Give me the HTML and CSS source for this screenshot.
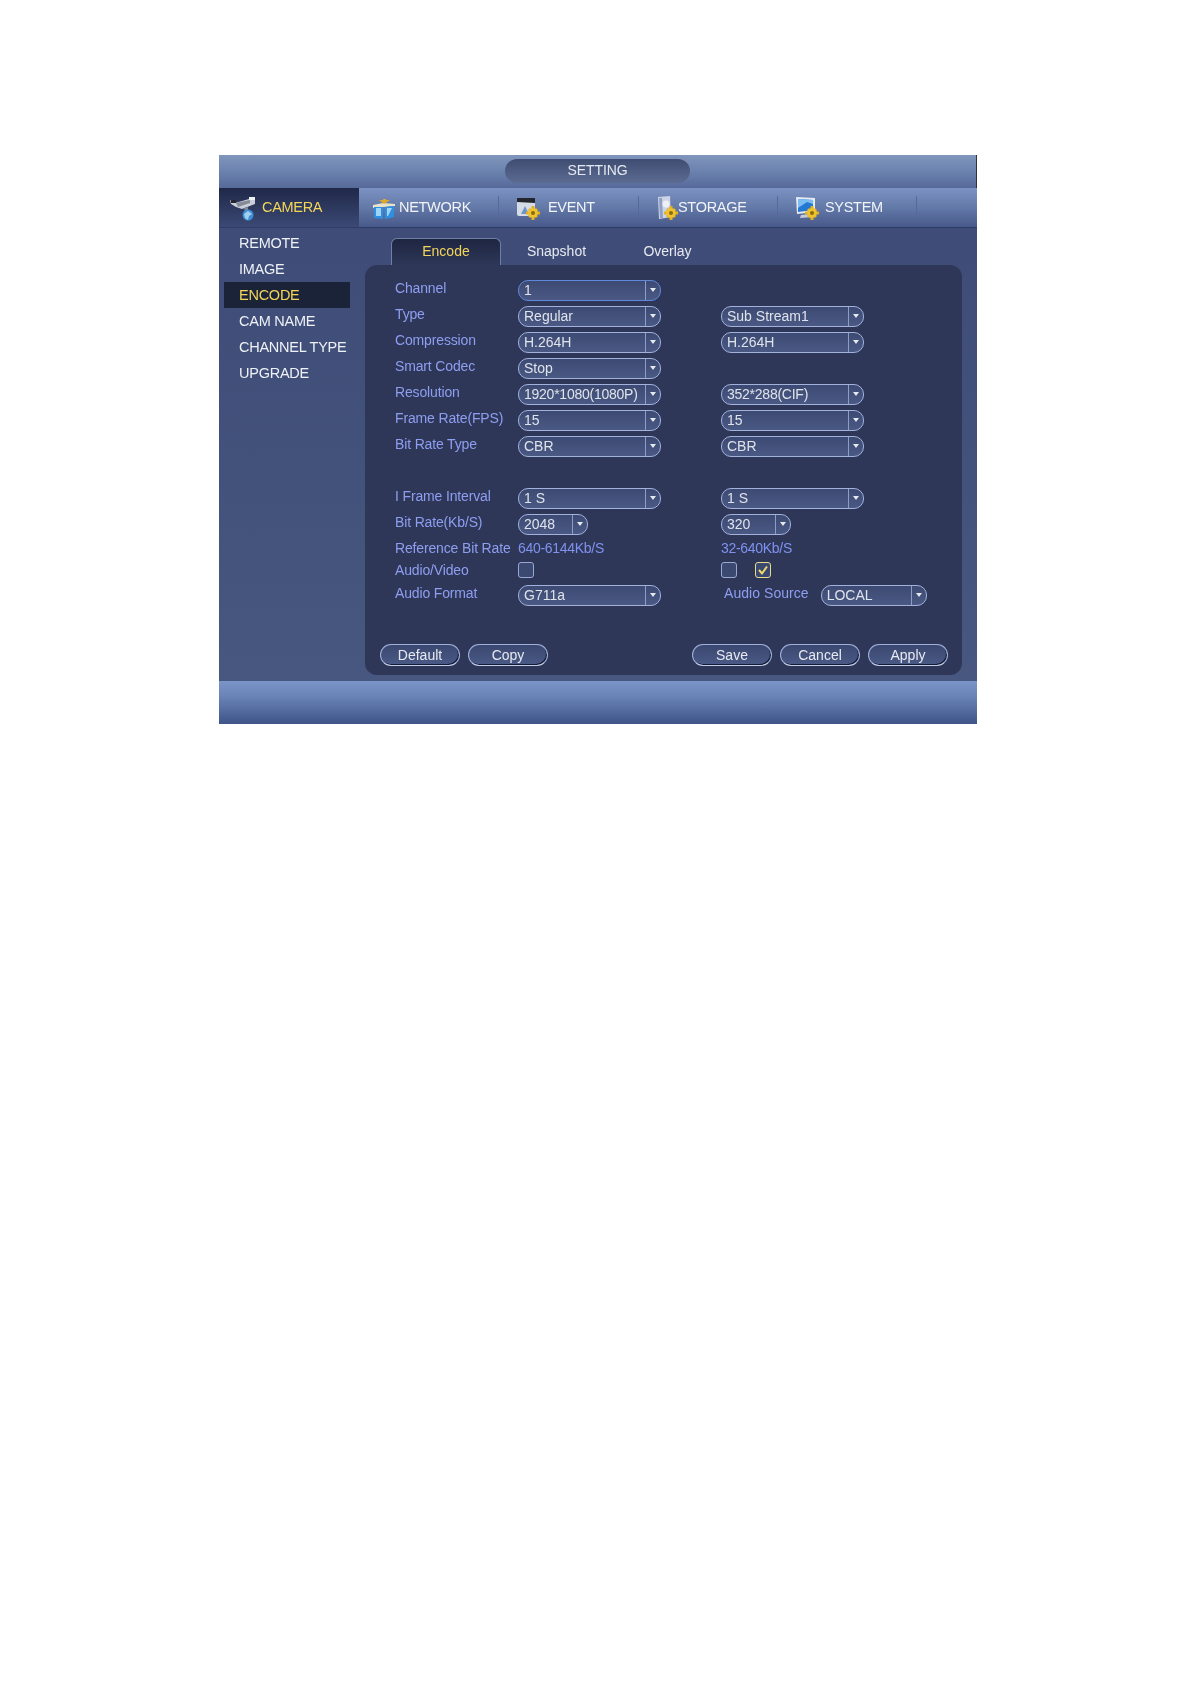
FILE: index.html
```html
<!DOCTYPE html>
<html>

<head>
    <title>SETTING</title>
    <link rel="stylesheet" href="styles.css">
</head>

<body>
    <div class="window">
        <div class="titlebar">
            <div class="title-pill">SETTING</div>
        </div>

        <div class="menubar">
            <div class="menu-item menu-camera active">
                <svg class="icon" width="26" height="24" viewBox="0 0 26 24">
                    <path d="M0 3 L5 6 L19 2 L25 1 L25 7 L12 12 L6 10 L1 7 Z" fill="#c9ced8"/>
                    <path d="M6 6 L20 3 L20 6 L8 10 Z" fill="#858b96"/>
                    <rect x="19" y="0" width="6" height="3" fill="#eef0f4"/>
                    <rect x="1" y="3" width="5" height="3" fill="#23262e"/>
                    <path d="M14 11 L18 10 L18 15 L15 15 Z" fill="#7f8796"/>
                    <circle cx="18" cy="18" r="5.5" fill="#3f8fd8"/>
                    <path d="M14 17 L18 14 L22 17 L19 19 L18 23 L15 21 Z" fill="#9fd0ef"/>
                </svg>
                <span>CAMERA</span>
            </div>
            <div class="menu-item menu-network">
                <svg class="icon" width="24" height="22" viewBox="0 0 24 22">
                    <path d="M1 7 L11 5 L23 6 L23 8 L11 9 L1 10 Z" fill="#e8e2c8"/>
                    <path d="M2 9 L11 9 L11 21 L2 20 Z" fill="#2f8fe0"/>
                    <path d="M13 9 L22 8 L22 19 L13 21 Z" fill="#2f8fe0"/>
                    <path d="M4 10 L9 10 L9 18 L4 18 Z" fill="#9fd4f6"/>
                    <path d="M15 10 L20 10 L16 18 L15 18 Z" fill="#9fd4f6"/>
                    <path d="M11 1 L14 1 L14 5 L11 5 Z M7 2 L18 2 L12 6 Z" fill="#e0a92c"/>
                </svg>
                <span>NETWORK</span>
            </div>
            <div class="menu-item menu-event">
                <svg class="icon" width="24" height="24" viewBox="0 0 24 24">
                    <rect x="1" y="2" width="18" height="18" rx="2" fill="#d5dce6"/>
                    <path d="M1 2 L19 2 L19 7 L1 6 Z" fill="#23262e"/>
                    <path d="M5 18 L9 10 L13 18 Z" fill="#6f94c8"/>
                    <use href="#gear" x="10" y="10"/>
                </svg>
                <span>EVENT</span>
            </div>
            <div class="menu-item menu-storage">
                <svg class="icon" width="21" height="24" viewBox="0 0 21 24">
                    <path d="M1 1 L13 0 L14 21 L2 23 Z" fill="#ccd4e6"/>
                    <path d="M2 2 L5 2 L6 22 L3 22 Z" fill="#8fa0c4"/>
                    <circle cx="9" cy="8" r="3.5" fill="#eef0f6"/>
                    <use href="#gear" x="7" y="10"/>
                </svg>
                <span>STORAGE</span>
            </div>
            <div class="menu-item menu-system">
                <svg class="icon" width="24" height="24" viewBox="0 0 24 24">
                    <path d="M1 1 L20 2 L20 16 L2 18 Z" fill="#e6eaf2"/>
                    <path d="M3 3 L18 4 L18 14 L3 16 Z" fill="#2478d2"/>
                    <path d="M3 12 L12 6 L18 8 L18 4 L3 3 Z" fill="#7dbcf0"/>
                    <path d="M6 19 L16 18 L18 21 L5 22 Z" fill="#c4cbda"/>
                    <use href="#gear" x="10" y="10"/>
                </svg>
                <span>SYSTEM</span>
            </div>
        </div>

        <div class="main">
            <div class="sidebar">
                <div class="side-item">REMOTE</div>
                <div class="side-item">IMAGE</div>
                <div class="side-item selected">ENCODE</div>
                <div class="side-item">CAM NAME</div>
                <div class="side-item">CHANNEL TYPE</div>
                <div class="side-item">UPGRADE</div>
            </div>

            <div class="content">
                <div class="tabs">
                    <div class="tab active">Encode</div>
                    <div class="tab">Snapshot</div>
                    <div class="tab">Overlay</div>
                </div>

                <div class="panel">
                    <div class="form">
                        <div class="row">
                            <div class="label">Channel</div>
                            <div class="select focus"><span>1</span><i></i></div>
                        </div>
                        <div class="row">
                            <div class="label">Type</div>
                            <div class="select"><span>Regular</span><i></i></div>
                            <div class="select second"><span>Sub Stream1</span><i></i></div>
                        </div>
                        <div class="row">
                            <div class="label">Compression</div>
                            <div class="select"><span>H.264H</span><i></i></div>
                            <div class="select second"><span>H.264H</span><i></i></div>
                        </div>
                        <div class="row">
                            <div class="label">Smart Codec</div>
                            <div class="select"><span>Stop</span><i></i></div>
                        </div>
                        <div class="row">
                            <div class="label">Resolution</div>
                            <div class="select tight"><span>1920*1080(1080P)</span><i></i></div>
                            <div class="select second tight"><span>352*288(CIF)</span><i></i></div>
                        </div>
                        <div class="row">
                            <div class="label">Frame Rate(FPS)</div>
                            <div class="select"><span>15</span><i></i></div>
                            <div class="select second"><span>15</span><i></i></div>
                        </div>
                        <div class="row">
                            <div class="label">Bit Rate Type</div>
                            <div class="select"><span>CBR</span><i></i></div>
                            <div class="select second"><span>CBR</span><i></i></div>
                        </div>
                        <div class="row"></div>
                        <div class="row">
                            <div class="label">I Frame Interval</div>
                            <div class="select"><span>1 S</span><i></i></div>
                            <div class="select second"><span>1 S</span><i></i></div>
                        </div>
                        <div class="row">
                            <div class="label">Bit Rate(Kb/S)</div>
                            <div class="select small"><span>2048</span><i></i></div>
                            <div class="select small second-small"><span>320</span><i></i></div>
                        </div>
                        <div class="row row-text">
                            <div class="label">Reference Bit Rate</div>
                            <div class="range">640-6144Kb/S</div>
                            <div class="range range-second">32-640Kb/S</div>
                        </div>
                        <div class="row row-check">
                            <div class="label">Audio/Video</div>
                            <div class="check"></div>
                            <div class="check check-second"></div>
                            <div class="check check-on">
                                <svg width="14" height="14" viewBox="0 0 14 14">
                                    <path d="M3 7 L6 10.5 L11 3.5" fill="none" stroke="#f2dc6a" stroke-width="2"/>
                                </svg>
                            </div>
                        </div>
                        <div class="row">
                            <div class="label">Audio Format</div>
                            <div class="select"><span>G711a</span><i></i></div>
                            <div class="label label-source">Audio Source</div>
                            <div class="select local"><span>LOCAL</span><i></i></div>
                        </div>
                    </div>

                    <div class="buttons">
                        <div class="btn-group">
                            <div class="btn">Default</div>
                            <div class="btn">Copy</div>
                        </div>
                        <div class="btn-group">
                            <div class="btn">Save</div>
                            <div class="btn">Cancel</div>
                            <div class="btn">Apply</div>
                        </div>
                    </div>
                </div>
            </div>
        </div>

        <div class="footer"></div>
    </div>

    <!-- shared gear for the menu icons -->
    <svg class="defs" width="0" height="0">
        <defs>
            <g id="gear">
                <path d="M5.5 0 H8.5 V14 H5.5 Z M0 5.5 H14 V8.5 H0 Z M2 4 L4 2 L12 10 L10 12 Z M10 2 L12 4 L4 12 L2 10 Z" fill="#e2b11c"/>
                <circle cx="7" cy="7" r="4.8" fill="#efc32e"/>
                <circle cx="7" cy="7" r="2" fill="#8a6a14"/>
            </g>
        </defs>
    </svg>
</body>

</html>
```

FILE: styles.css
```css
body {
    margin: 0;
    padding: 155px 0 0 219px;
    background-color: white;
    font-family: "Liberation Sans", Arial, sans-serif;
    font-size: 14px;
}

.defs {
    position: absolute;
}

.window {
    width: 758px;
    height: 569px;
    display: flex;
    flex-direction: column;
    filter: blur(0.4px);
}

/* top bar with the pill */
.titlebar {
    height: 33px;
    display: flex;
    justify-content: center;
    padding-top: 4px;
    box-sizing: border-box;
    background: linear-gradient(#8096bc, #6d84b0 45%, #566a9a);
    border-right: 1px solid #333;
}

.title-pill {
    width: 185px;
    height: 24px;
    border-radius: 12px;
    background: linear-gradient(#3f4d72, #5c6b92);
    color: #e4e8f0;
    line-height: 22px;
    letter-spacing: -0.1px;
    text-align: center;
}

/* menu */
.menubar {
    height: 40px;
    display: flex;
    box-sizing: border-box;
    background: linear-gradient(#7c92c2, #6379a8 50%, #47598a);
    border-bottom: 1px solid #2f3c66;
}

.menu-item {
    height: 39px;
    padding-bottom: 2px;
    box-sizing: border-box;
    display: flex;
    align-items: center;
    color: #f2f4f8;
    font-size: 14.5px;
    letter-spacing: -0.3px;
    position: relative;
}

.menu-item::after {
    content: "";
    position: absolute;
    right: 0;
    top: 8px;
    bottom: 8px;
    width: 1px;
    background: #566a99;
}

.menu-camera {
    width: 140px;
    padding-left: 11px;
    background: linear-gradient(#1f2848, #3b4975);
    color: #f3d55a;
}

.menu-camera::after {
    display: none;
}

.menu-camera .icon {
    margin-right: 6px;
    margin-top: 4px;
}

.menu-network {
    width: 140px;
    padding-left: 13px;
}

.menu-network .icon {
    margin-right: 3px;
    margin-top: 4px;
}

.menu-event {
    width: 140px;
    padding-left: 17px;
}

.menu-event .icon {
    margin-right: 8px;
    margin-top: 2px;
}

.menu-storage {
    width: 139px;
    padding-left: 18px;
}

.menu-storage .icon {
    margin-top: 2px;
}

.menu-system {
    width: 139px;
    padding-left: 17px;
}

.menu-system .icon {
    margin-right: 6px;
    margin-top: 2px;
}

/* middle part */
.main {
    flex: 1;
    display: flex;
    background: linear-gradient(#3e4c77, #47577f);
}

.sidebar {
    width: 146px;
    padding: 2px 0 0 5px;
    box-sizing: border-box;
}

.side-item {
    width: 126px;
    height: 26px;
    line-height: 26px;
    padding-left: 15px;
    box-sizing: border-box;
    color: #eef1f6;
    font-size: 14.5px;
    letter-spacing: -0.25px;
    white-space: nowrap;
}

.selected {
    background-color: #1b2339;
    color: #f3d55a;
}

.content {
    width: 597px;
    display: flex;
    flex-direction: column;
}

.tabs {
    height: 27px;
    margin-top: 10px;
    padding-left: 26px;
    display: flex;
}

.tab {
    width: 111px;
    line-height: 27px;
    text-align: center;
    color: #e6e9f0;
}

.tab.active {
    width: 110px;
    box-sizing: border-box;
    border: 1px solid #6f80a8;
    border-bottom: none;
    border-radius: 6px 6px 0 0;
    background: linear-gradient(#1d2540, #2f3759);
    color: #f3d55a;
    line-height: 25px;
}

.panel {
    height: 410px;
    padding: 12px 14px 9px 15px;
    box-sizing: border-box;
    display: flex;
    flex-direction: column;
    justify-content: space-between;
    background-color: #2f3759;
    border-radius: 12px;
}

.row {
    height: 26px;
    display: flex;
    align-items: flex-start;
    padding-left: 15px;
}

.row-text {
    height: 22px;
}

.row-check {
    height: 23px;
}

.label {
    width: 123px;
    line-height: 22px;
    color: #8e9ef0;
    letter-spacing: -0.15px;
    white-space: nowrap;
}

.select {
    width: 143px;
    height: 21px;
    margin-top: 3px;
    box-sizing: border-box;
    display: flex;
    justify-content: space-between;
    border: 1px solid #a3b2dc;
    border-radius: 10px;
    background: linear-gradient(#3c4a73, #4a5984);
    color: #dfe3ea;
    line-height: 19px;
    white-space: nowrap;
}

.tight {
    letter-spacing: -0.25px;
}

.select span {
    padding-left: 5px;
}

.select i {
    width: 14px;
    border-left: 1px solid #8e9dc6;
    position: relative;
}

.select i::after {
    content: "";
    position: absolute;
    left: 4px;
    top: 7px;
    border-left: 3.5px solid transparent;
    border-right: 3.5px solid transparent;
    border-top: 4px solid #e6e9f0;
}

.focus {
    border-color: #5f88d8;
}

.second {
    margin-left: 60px;
}

.small {
    width: 70px;
}

.second-small {
    margin-left: 133px;
}

.local {
    width: 106px;
    margin-left: 12px;
}

.label-source {
    width: auto;
    margin-left: 63px;
    letter-spacing: 0.05px;
}

.range {
    width: 203px;
    line-height: 22px;
    color: #7f92ee;
    letter-spacing: -0.3px;
}

.range-second {
    width: auto;
}

.check {
    width: 16px;
    height: 16px;
    margin-top: 3px;
    box-sizing: border-box;
    border: 1px solid #9aa9d4;
    border-radius: 3px;
    background-color: #3b4870;
}

.check-second {
    margin-left: 187px;
}

.check-on {
    margin-left: 18px;
    border-color: #e8dc8c;
}

.check-on svg {
    display: block;
}

.buttons {
    display: flex;
    justify-content: space-between;
}

.btn-group {
    display: flex;
    gap: 8px;
}

.btn {
    width: 80px;
    height: 22px;
    box-sizing: border-box;
    border: 1px solid #a3b2dc;
    border-bottom-color: #c3cdea;
    border-radius: 11px;
    background: linear-gradient(#3a4770, #4a5a86);
    box-shadow: inset -1px -1px 0 #141a33;
    color: #e6e9f0;
    line-height: 20px;
    text-align: center;
}

.footer {
    height: 43px;
    background: linear-gradient(#7a94c8, #6a84b8 35%, #3f5488);
}
```
